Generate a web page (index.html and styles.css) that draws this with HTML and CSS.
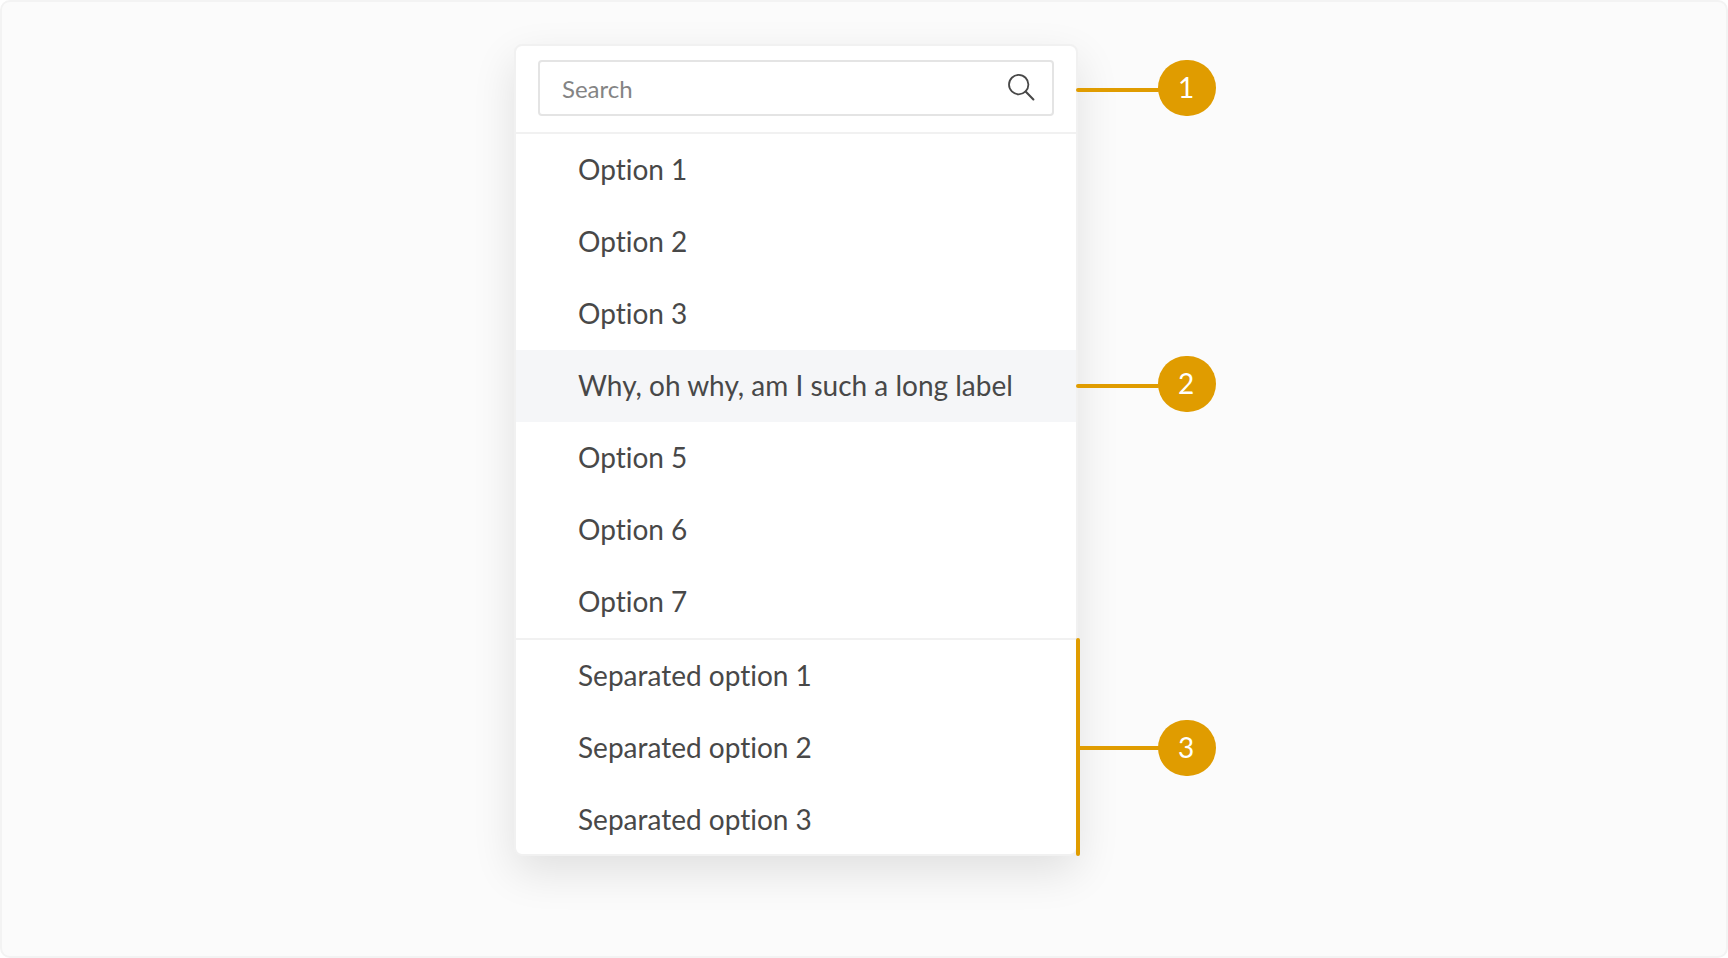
FILE: index.html
```html
<!DOCTYPE html>
<html lang="en">
<head>
<meta charset="utf-8">
<title>Dropdown anatomy</title>
<link rel="stylesheet" href="styles.css">
</head>
<body>
<main class="stage">
  <section class="menu">
    <header class="menu-search">
      <label class="field">
        <span class="placeholder">Search</span>
        <svg class="icon" viewBox="0 0 28 28" fill="none" stroke="#484848" stroke-width="1.8">
          <circle cx="11.7" cy="11.6" r="9.7"/>
          <path d="M18.6 18.6L26.4 26.4" stroke-width="2.1" stroke-linecap="round"/>
        </svg>
      </label>
      <div class="callout callout-search"><i class="line"></i><b class="badge">1</b></div>
    </header>
    <ul class="options">
      <li class="option">Option 1</li>
      <li class="option">Option 2</li>
      <li class="option">Option 3</li>
      <li class="option hovered">Why, oh why, am I such a long label
        <div class="callout callout-option"><i class="line"></i><b class="badge">2</b></div>
      </li>
      <li class="option">Option 5</li>
      <li class="option">Option 6</li>
      <li class="option">Option 7</li>
    </ul>
    <ul class="options separated">
      <li class="option">Separated option 1</li>
      <li class="option">Separated option 2</li>
      <li class="option">Separated option 3</li>
      <li class="bracket"></li>
      <li class="callout callout-group"><i class="line"></i><b class="badge">3</b></li>
    </ul>
  </section>
</main>
</body>
</html>
```
FILE: styles.css
```css
* { box-sizing: border-box; }
body {
  margin: 0;
  background: #fff;
  font-family: Lato, "Open Sans", sans-serif;
  font-variant-ligatures: none;
  color: #484848;
}
.stage {
  height: 958px;
  padding: 42px 0 0 512px;
  background: #fbfbfb;
  border: 2px solid #f3f3f3;
  border-radius: 10px;
}
.menu {
  width: 564px;
  height: 812px;
  background: #fff;
  background-clip: padding-box;
  border: 2px solid #f1f1f1;
  border-radius: 8px;
  box-shadow: 0 16px 44px rgba(0, 0, 0, 0.11);
}
.menu-search {
  position: relative;
  height: 88px;
  padding: 14px 22px 0;
  border-bottom: 2px solid #f1f1f1;
}
.field {
  display: flex;
  align-items: center;
  justify-content: space-between;
  height: 56px;
  padding: 0 17px 0 22px;
  border: 2px solid #e4e4e4;
  border-radius: 4px;
}
.placeholder {
  padding-top: 2px;
  font-size: 24px;
  line-height: 32px;
  color: #848484;
}
.icon {
  width: 28px;
  height: 28px;
  margin-bottom: 2px;
}
.options {
  position: relative;
  margin: 0;
  padding: 0;
  list-style: none;
}
.separated { border-top: 2px solid #f1f1f1; }
.option {
  position: relative;
  height: 72px;
  padding-left: 62px;
  font-size: 28px;
  line-height: 70px;
  white-space: nowrap;
}
.hovered { background: #f5f6f8; }

/* Numbered markers hang off the right edge of the menu */
.callout {
  position: absolute;
  left: 100%;
  display: flex;
  align-items: center;
  height: 56px;
}
.callout-search { top: 14px; }
.callout-option { top: 6px; }
.callout-group { top: 80px; }
.line {
  width: 84px;
  height: 4px;
  margin: 4px -2px 0 0;
  border-radius: 2px;
  background: #e09c00;
}
.callout-group .line { margin-top: 0; }
.badge {
  width: 58px;
  height: 56px;
  padding-right: 2px;
  border-radius: 28px;
  background: #e09c00;
  color: #fff;
  font-size: 28px;
  font-weight: 400;
  line-height: 54px;
  text-align: center;
}
.bracket {
  position: absolute;
  top: -2px;
  left: 100%;
  width: 4px;
  height: 218px;
  border-radius: 2px;
  background: #e09c00;
}
```
